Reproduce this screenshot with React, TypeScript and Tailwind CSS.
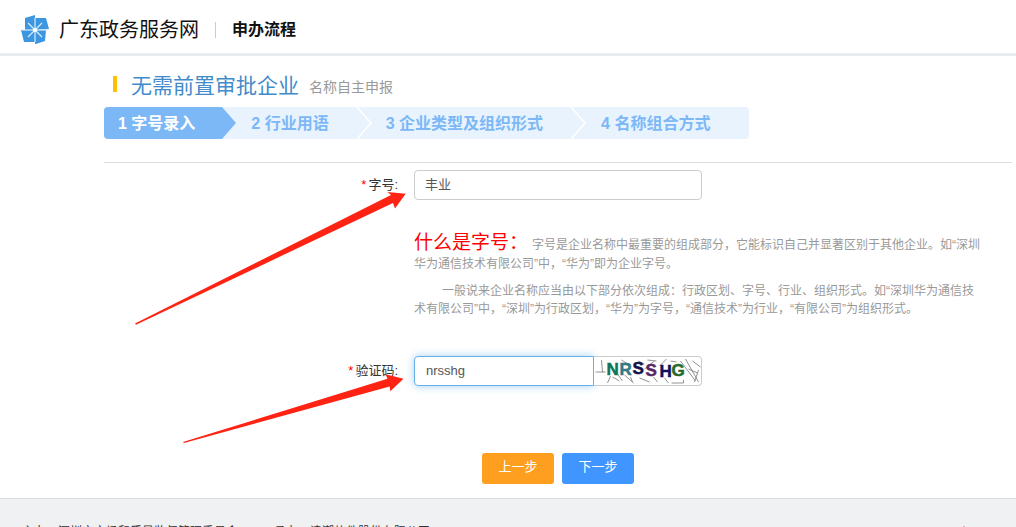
import React, { useState } from 'react';

interface ChevronProps {
  left: string;
  line: string;
}

const Chevron = ({ left, line }: ChevronProps) => (
  <svg width="15" height="32" viewBox="0 0 15 32" className="shrink-0" aria-hidden="true">
    <polygon points="0,0 14,16 0,32" fill={left} />
    <polyline points="0,0 14,16 0,32" fill="none" stroke={line} strokeWidth="1.5" />
  </svg>
);

const Logo = () => (
  <svg width="28" height="30" viewBox="0 0 28 30" className="shrink-0" aria-hidden="true">
    <g fill="#3d97e0">
      <polygon points="4,3 14,0 14,15 4,15" />
      <polygon points="14,3 25,3 28,14 14,15" />
      <polygon points="14,15 25,15 24,26 15,29 14,29" />
      <polygon points="0,15 14,15 14,27 3,27" />
    </g>
    <g stroke="#d5ebfb" strokeWidth="1.2">
      <line x1="14" y1="3" x2="14" y2="27" />
      <line x1="1" y1="15" x2="27" y2="15" />
      <line x1="7" y1="8" x2="21" y2="22" />
      <line x1="21" y1="8" x2="7" y2="22" />
    </g>
    <circle cx="14" cy="15" r="2" fill="#fff" />
  </svg>
);

const LETTERS = [
  { char: 'N', x: 12, y: 18, color: '#0f7458' },
  { char: 'R', x: 25, y: 18, color: '#347a84' },
  { char: 'S', x: 38, y: 17, color: '#10104c' },
  { char: 'S', x: 51, y: 19, color: '#5a2763' },
  { char: 'H', x: 65, y: 20, color: '#10105c' },
  { char: 'G', x: 77, y: 19, color: '#246a2c' },
];

const Captcha = () => (
  <svg viewBox="0 0 106 28" className="h-full w-full" role="img" aria-label="NRSSHG">
    <g fill="none" stroke="#777" strokeWidth="0.8">
      <path d="M1 15h10M7 3l1 12M13 26l3-7M18 20l7 4M28 24l-5-7M30 18l9 8M36 20l2 5M27 3l8 5" />
      <path d="M44 4l6 3M50 12l10-8M53 3l9 1M45 21l10 4M59 20l4 5M72 2l-7 7M70 21l4 5" />
      <path d="M77 26h12v-3M76 4l6 1M86 4l15 20M91 2l13 23M98 4l8 6M94 12l9 4M100 25l4-12" />
    </g>
    {LETTERS.map((l, i) => (
      <text
        key={i}
        x={l.x}
        y={l.y}
        fill={l.color}
        stroke={l.color}
        strokeWidth="0.5"
        className="font-['Liberation_Sans',sans-serif] text-[17px] font-bold"
      >
        {l.char}
      </text>
    ))}
  </svg>
);

// hand-drawn pointers that sit over the form
const Pointers = () => (
  <svg
    width="410"
    height="450"
    viewBox="0 0 410 450"
    className="pointer-events-none absolute left-0 top-0"
    fill="#ff2314"
    aria-hidden="true"
  >
    <polygon points="135,323.5 391,195 387.5,192 405.7,193.7 395,208.5 393,203 136,324.8" />
    <polygon points="183,442 387.5,378.8 385.5,374.3 403.5,378.7 390.3,391.2 389.7,386.5 184,443" />
  </svg>
);

const Required = () => <span className="mr-0.5 text-[#f00]">*</span>;

export default function App() {
  const [name, setName] = useState('丰业');
  const [code, setCode] = useState('nrsshg');

  return (
    <div
      lang="zh-CN"
      className="relative flex h-screen flex-col overflow-hidden bg-white font-['Liberation_Sans','Noto_Sans_CJK_SC',sans-serif] text-[13px] text-[#333]"
    >
      <header className="flex h-[56px] shrink-0 items-center border-b-[3px] border-[#e9ecef] pl-[21px] pt-[6px]">
        <Logo />
        <span className="ml-[10px] text-[20px] text-[#111]">广东政务服务网</span>
        <span className="mx-4 h-4 w-px bg-[#ccc]" />
        <h1 className="text-[16px] font-bold text-[#111]">申办流程</h1>
      </header>

      <main className="ml-[104px] mr-1 shrink-0">
        <div className="flex h-[51px] items-center pl-[9px] pt-2">
          <span className="mb-1 h-4 w-1 bg-[#ffc000]" />
          <h2 className="ml-[14px] text-[21px] text-[#428bca]">无需前置审批企业</h2>
          <small className="ml-[10px] mt-1 text-[14px] text-[#999]">名称自主申报</small>
        </div>

        <ol className="flex h-8 w-fit items-center overflow-hidden whitespace-nowrap rounded bg-[#e8f3fe] text-[16px] font-bold text-[#7cb8f6]">
          <li className="flex h-8 items-center bg-[#7cb8f6] pl-[14px] pr-[26px] pt-[2px] text-white">1 字号录入</li>
          <Chevron left="#7cb8f6" line="#7cb8f6" />
          <li className="pl-[15px] pr-7 pt-[2px]">2 行业用语</li>
          <Chevron left="#e8f3fe" line="#fff" />
          <li className="pl-[14px] pr-7 pt-[2px]">3 企业类型及组织形式</li>
          <Chevron left="#e8f3fe" line="#fff" />
          <li className="pl-[15px] pr-[39px] pt-[2px]">4 名称组合方式</li>
        </ol>

        <hr className="mt-[23px] border-[#ddd]" />

        <form className="mt-[7px]" onSubmit={e => e.preventDefault()}>
          <div className="grid grid-cols-[294px_1fr] gap-x-4">
            <label htmlFor="name" className="pt-[5px] text-right">
              <Required />
              字号:
            </label>
            <input
              id="name"
              type="text"
              value={name}
              onChange={e => setName(e.target.value)}
              className="h-[30px] w-72 rounded border border-[#ccc] px-[10px] pb-[3px] text-[#555] outline-none"
            />

            <div className="col-start-2 mt-[30px] text-[12px] leading-[18px] text-[#999]">
              <p>
                <span className="mr-1 text-[19px] leading-[25px] text-[#f00]">什么是字号：</span>
                字号是企业名称中最重要的组成部分，它能标识自己并显著区别于其他企业。如“深圳
                <br />
                华为通信技术有限公司”中，“华为”即为企业字号。
              </p>
              <p className="mt-[9px] indent-7">
                一般说来企业名称应当由以下部分依次组成：行政区划、字号、行业、组织形式。如“深圳华为通信技
                <br />
                术有限公司”中，“深圳”为行政区划，“华为”为字号，“通信技术”为行业，“有限公司”为组织形式。
              </p>
            </div>

            <label htmlFor="code" className="mt-[38px] pt-[5px] text-right">
              <Required />
              验证码:
            </label>
            <div className="mt-[38px] flex h-[30px]">
              <input
                id="code"
                type="text"
                value={code}
                onChange={e => setCode(e.target.value)}
                className="w-[180px] rounded-l border border-[#66afe9] px-[11px] text-[#555] shadow-[0_0_8px_rgba(102,175,233,0.6)] outline-none"
              />
              <div className="w-[108px] rounded-r border border-l-0 border-[#ccc] bg-white">
                <Captcha />
              </div>
            </div>
          </div>

          <div className="mt-[67px] flex justify-center gap-2 text-white">
            <button type="button" className="h-[31px] w-[72px] cursor-pointer rounded-[3px] bg-[#ff9f1f] pb-[3px]">
              上一步
            </button>
            <button type="submit" className="h-[31px] w-[72px] cursor-pointer rounded-[3px] bg-[#4195ff] pb-[3px]">
              下一步
            </button>
          </div>
        </form>
      </main>

      <footer className="mt-[14px] flex shrink-0 items-start border-t border-[#ddd] bg-[#eff1f3] pb-6 pl-[22px] pr-9 pt-6 text-[12px]">
        <span>主办：深圳市市场和质量监督管理委员会</span>
        <span className="ml-9">承办：浪潮软件股份有限公司</span>
        <svg width="32" height="36" viewBox="0 0 32 36" className="ml-auto mt-[3px]" aria-hidden="true">
          <path d="M16 0l4 5 10 2-2 18-12 10L4 25 2 7l10-2z" fill="#e0474c" />
        </svg>
      </footer>

      <Pointers />
    </div>
  );
}
